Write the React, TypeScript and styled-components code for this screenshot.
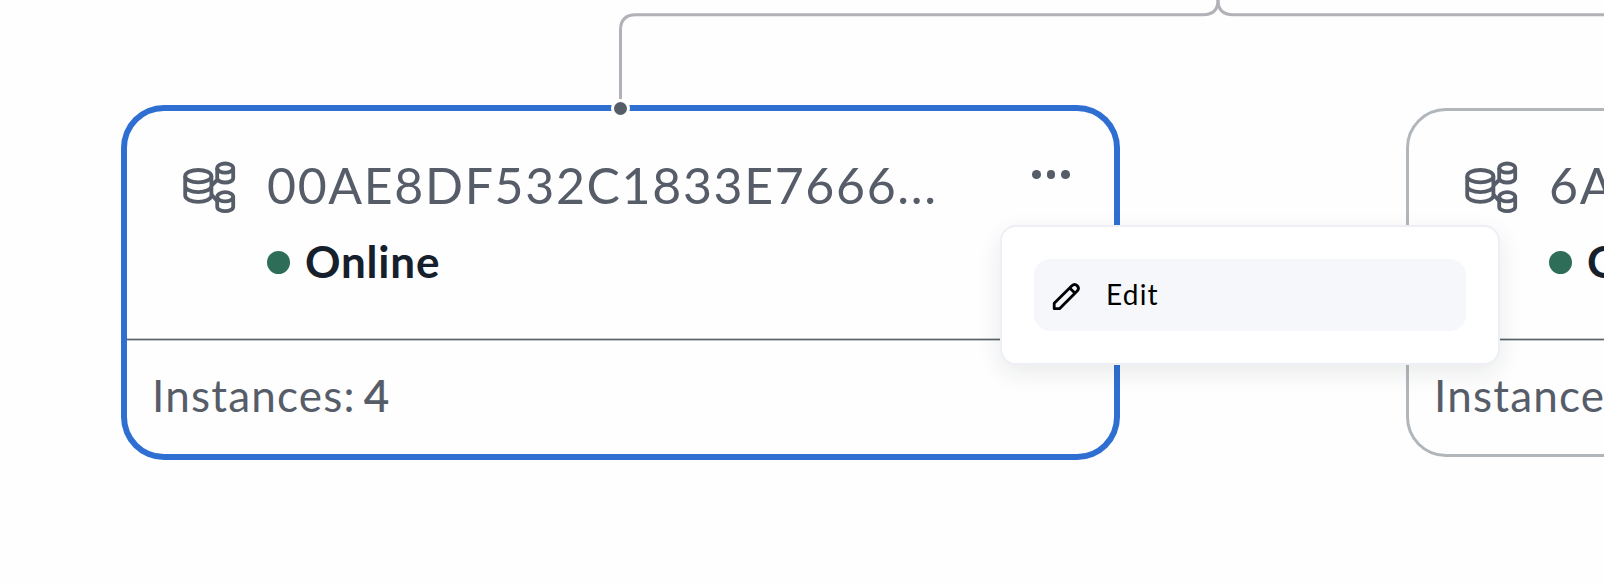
import React from "react";
import styled, { createGlobalStyle } from "styled-components";

const GlobalStyle = createGlobalStyle`
  * { box-sizing: border-box; }
  body { margin: 0; background: #fefefe; }
`;

const Canvas = styled.main`
  position: relative;
  width: 1604px;
  height: 584px;
  overflow: hidden;
  background: #fefefe;
  font-family: Lato, "Open Sans", sans-serif;
  color: #565d69;
`;

const Edges = styled.svg`
  position: absolute;
  inset: 0;
  fill: none;
  stroke: #b1b1b7;
  stroke-width: 3;
`;

const Node = styled.article<{ $x: number; $selected?: boolean }>`
  position: absolute;
  top: 108px;
  left: ${(p) => p.$x}px;
  width: 993px;
  height: 349px;
  display: flex;
  flex-direction: column;
  border: 3px solid ${(p) => (p.$selected ? "#2f6fd2" : "#b1b6bb")};
  border-radius: 40px;
  box-shadow: ${(p) => (p.$selected ? "0 0 0 3px #2f6fd2" : "none")};
  background: #fefefe;
`;

const Handle = styled.span`
  position: absolute;
  top: -12px;
  left: 484px;
  width: 19px;
  height: 19px;
  border: 3px solid #fefefe;
  border-radius: 50%;
  background: #565d69;
`;

const NodeHeader = styled.header`
  display: flex;
  align-items: flex-start;
  flex: none;
  height: 229px;
  padding: 47px 44px 0 53px;
  border-bottom: 1px solid #59606b;
  box-shadow: 0 1px #c3c8c8, inset 0 -1px #c3c8c8;
`;

const NodeIcon = styled.svg`
  flex: none;
  width: 60px;
  height: 60px;
  fill: none;
  stroke: #565d69;
  stroke-width: 3.8;
`;

const Summary = styled.div`
  flex: 1;
  margin: -3px 0 0 27px;
`;

const Title = styled.h2`
  margin: 0;
  font-size: 50px;
  font-weight: 400;
  line-height: 60px;
  letter-spacing: 1.65px;
  white-space: nowrap;
`;

const Status = styled.div`
  display: flex;
  align-items: center;
  gap: 15px;
  margin-top: 18px;
  color: #16202c;
  font-size: 44px;
  font-weight: 700;
  line-height: 57px;
  letter-spacing: 0.8px;
`;

const StatusDot = styled.span`
  width: 23px;
  height: 23px;
  margin-top: 2px;
  border-radius: 50%;
  background: #2e6e58;
`;

const MoreButton = styled.button`
  display: flex;
  gap: 6px;
  margin-top: 12px;
  padding: 0;
  border: 0;
  background: none;
`;

const MoreDot = styled.i`
  width: 8.7px;
  height: 8.7px;
  border-radius: 50%;
  background: #565d69;
`;

const NodeFooter = styled.footer`
  display: flex;
  gap: 8px;
  padding: 25px 25px 0;
  font-size: 44px;
  line-height: 60px;
  white-space: nowrap;
`;

const Label = styled.span`
  letter-spacing: 1.2px;
`;

const Count = styled.strong`
  font-weight: 600;
`;

const Menu = styled.div`
  position: absolute;
  top: 225px;
  left: 1000px;
  width: 500px;
  height: 140px;
  padding: 32px;
  border: 2px solid #eeeff6;
  border-radius: 16px;
  background: #fff;
  box-shadow: 0 8px 24px rgba(20, 30, 40, 0.09);
`;

const MenuItem = styled.button`
  display: flex;
  align-items: center;
  width: 100%;
  height: 72px;
  padding: 0 16px;
  border: 0;
  border-radius: 16px;
  background: #f5f7fb;
  color: #000;
  font-family: inherit;
  font-size: 28px;
  line-height: 36px;
  letter-spacing: 1.2px;
`;

const MenuLabel = styled.span`
  padding-bottom: 2px;
`;

const PencilIcon = styled.svg`
  width: 32px;
  height: 32px;
  margin: 3px 24px 0 0;
  fill: none;
  stroke: #000;
  stroke-width: 2.8;
  stroke-linejoin: round;
`;

function ClusterIcon() {
  return (
    <NodeIcon viewBox="0 0 60 60">
      <ellipse cx="18.3" cy="18.2" rx="13.1" ry="6.2" />
      <path d="M5.2 18.2V37.6C5.2 41 11 43.8 18.3 43.8S31.4 41 31.4 37.6V18.2M5.2 28C5.2 31.4 11 34.1 18.3 34.1S31.4 31.4 31.4 28" />
      <path d="M31.4 27.5L37.2 22M31.4 36.5L37.2 43" />
      <ellipse cx="45.2" cy="10.1" rx="8" ry="4.6" />
      <path d="M37.2 10.1V20C37.2 22.6 40.8 24.5 45.2 24.5S53.2 22.6 53.2 20V10.1" />
      <ellipse cx="45.2" cy="38.8" rx="8" ry="4.6" />
      <path d="M37.2 38.8V48.7C37.2 51.3 40.8 53.2 45.2 53.2S53.2 51.3 53.2 48.7V38.8" />
    </NodeIcon>
  );
}

type ServerNodeProps = {
  x: number;
  title: string;
  instances: number;
  selected?: boolean;
};

function ServerNode({ x, title, instances, selected }: ServerNodeProps) {
  return (
    <Node $x={x} $selected={selected}>
      <NodeHeader>
        <ClusterIcon />
        <Summary>
          <Title>{title}</Title>
          <Status>
            <StatusDot />
            Online
          </Status>
        </Summary>
        <MoreButton aria-label="More actions">
          <MoreDot />
          <MoreDot />
          <MoreDot />
        </MoreButton>
      </NodeHeader>
      <NodeFooter>
        <Label>Instances:</Label>
        <Count>{instances}</Count>
      </NodeFooter>
      <Handle />
    </Node>
  );
}

export default function App() {
  return (
    <Canvas>
      <GlobalStyle />
      <Edges width="1604" height="584">
        <path d="M1218 -10V0Q1218 14.7 1203 14.7H636Q620.5 14.7 620.5 30V99" />
        <path d="M1218 -10V0Q1218 14.7 1233 14.7H1604" />
      </Edges>
      <ServerNode x={124} title="00AE8DF532C1833E7666..." instances={4} selected />
      <ServerNode x={1406} title="6A" instances={4} />
      <Menu role="menu">
        <MenuItem role="menuitem">
          <PencilIcon viewBox="0 0 32 32">
            <path d="M4.2 27.7V22.3L21.9 4.7Q24.6 2.3 27.3 4.7Q29.7 7.4 27.2 10.1L9.5 27.7ZM19.7 6.9L25.1 12.2" />
          </PencilIcon>
          <MenuLabel>Edit</MenuLabel>
        </MenuItem>
      </Menu>
    </Canvas>
  );
}
